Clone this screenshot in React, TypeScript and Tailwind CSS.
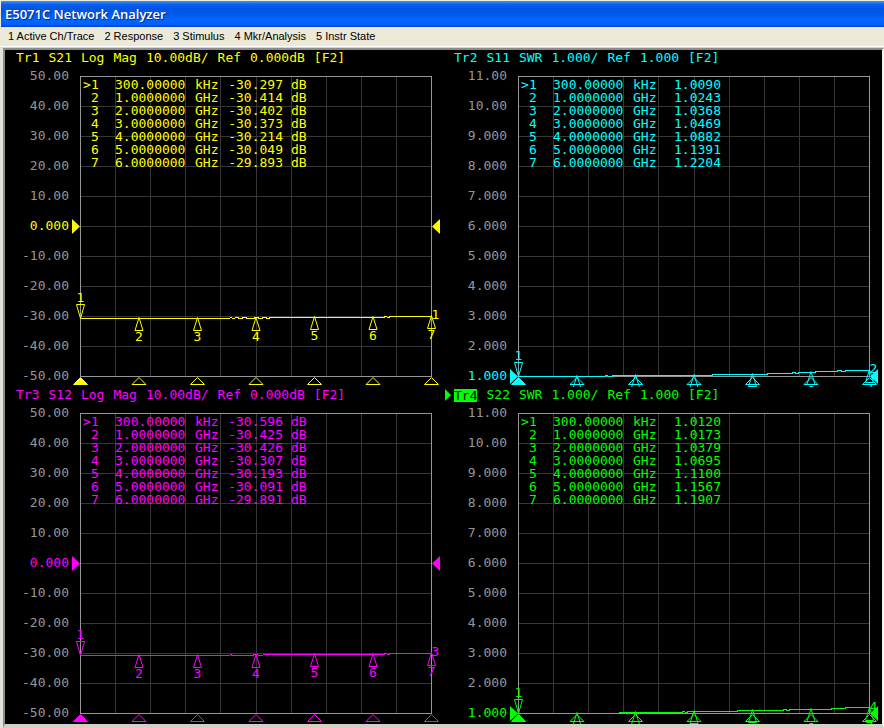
import React from "react";

type Marker = {
  freq: string;
  unit: string;
  value: string;
  y: number;
};

type Trace = {
  id: number;
  header: string[];
  labels: string[];
  refIndex: number;
  valueUnit?: string;
  active?: boolean;
  text: string;
  bg: string;
  points: string;
  markers: Marker[];
};

const FREQS = [
  ["300.00000", "kHz"],
  ["1.0000000", "GHz"],
  ["2.0000000", "GHz"],
  ["3.0000000", "GHz"],
  ["4.0000000", "GHz"],
  ["5.0000000", "GHz"],
  ["6.0000000", "GHz"],
];

const DB_LABELS = ["50.00", "40.00", "30.00", "20.00", "10.00", "0.000", "-10.00", "-20.00", "-30.00", "-40.00", "-50.00"];
const SWR_LABELS = ["11.00", "10.00", "9.000", "8.000", "7.000", "6.000", "5.000", "4.000", "3.000", "2.000", "1.000"];

const MENU = ["1 Active Ch/Trace", "2 Response", "3 Stimulus", "4 Mkr/Analysis", "5 Instr State"];

// Plot space is 351 x 300 units, origin at the top left.
const LOG_POINTS =
  "0,242 149,242 150,241 153,242 156,241 160,242 164,241 168,242 172,242 176,241 180,242 184,241 188,242 190,241 303,241 305,240 308,241 310,240 351,240";
const S12_POINTS =
  "0,242 149,242 150,241 152,242 172,242 174,241 180,242 186,241 303,241 305,240 308,241 310,240 351,240";
const S11_POINTS =
  "0,300 86,300 87,299 92,300 96,299 193,299 195,298 211,298 213,298 248,298 250,297 273,297 275,296 279,297 281,296 296,296 298,295 318,295 320,294 326,295 328,294 351,294";
const S22_POINTS =
  "0,300 100,300 101,299 163,299 165,298 168,299 170,298 218,298 220,297 264,297 266,296 270,297 272,296 312,296 314,295 326,295 328,294 351,294";

const LAST_LABEL_Y = 295;

function makeMarkers(values: string[], ys: number[]): Marker[] {
  return values.map((value, i) => ({ freq: FREQS[i][0], unit: FREQS[i][1], value, y: ys[i] }));
}

const LOG_Y = [242, 241, 241, 241, 240, 240, 239];

const TRACES: Trace[] = [
  {
    id: 1,
    header: ["S21", "Log", "Mag", "10.00dB/", "Ref", "0.000dB", "[F2]"],
    labels: DB_LABELS,
    refIndex: 5,
    valueUnit: "dB",
    text: "text-[#ffff00]",
    bg: "bg-[#ffff00]",
    points: LOG_POINTS,
    markers: makeMarkers(["-30.297", "-30.414", "-30.402", "-30.373", "-30.214", "-30.049", "-29.893"], LOG_Y),
  },
  {
    id: 2,
    header: ["S11", "SWR", "1.000/", "Ref", "1.000", "[F2]"],
    labels: SWR_LABELS,
    refIndex: 10,
    text: "text-[#00ffff]",
    bg: "bg-[#00ffff]",
    points: S11_POINTS,
    markers: makeMarkers(
      ["1.0090", "1.0243", "1.0368", "1.0469", "1.0882", "1.1391", "1.2204"],
      [300, 299, 298, 298, 297, 295, 293],
    ),
  },
  {
    id: 3,
    header: ["S12", "Log", "Mag", "10.00dB/", "Ref", "0.000dB", "[F2]"],
    labels: DB_LABELS,
    refIndex: 5,
    valueUnit: "dB",
    text: "text-[#ff00ff]",
    bg: "bg-[#ff00ff]",
    points: S12_POINTS,
    markers: makeMarkers(["-30.596", "-30.425", "-30.426", "-30.307", "-30.193", "-30.091", "-29.891"], LOG_Y),
  },
  {
    id: 4,
    header: ["S22", "SWR", "1.000/", "Ref", "1.000", "[F2]"],
    labels: SWR_LABELS,
    refIndex: 10,
    active: true,
    text: "text-[#00ff00]",
    bg: "bg-[#00ff00]",
    points: S22_POINTS,
    markers: makeMarkers(
      ["1.0120", "1.0173", "1.0379", "1.0695", "1.1100", "1.1567", "1.1907"],
      [300, 299, 298, 297, 296, 295, 294],
    ),
  },
];

const TENTHS = [1, 2, 3, 4, 5, 6, 7, 8, 9];

function Plot({ trace }: { trace: Trace }) {
  const refY = `${trace.refIndex * 10}%`;
  const endY = trace.markers[6].y;

  return (
    <svg className={`absolute inset-0 h-full w-full overflow-visible ${trace.text}`} aria-hidden="true">
      <g transform="translate(0.5 0.5)" shapeRendering="crispEdges">
        {TENTHS.map((n) => (
          <React.Fragment key={n}>
            <line x1={`${n * 10}%`} x2={`${n * 10}%`} y1="0" y2="100%" stroke="#373737" />
            <line x1="0" x2="100%" y1={`${n * 10}%`} y2={`${n * 10}%`} stroke="#373737" />
          </React.Fragment>
        ))}
        <rect width="100%" height="100%" fill="none" stroke="#969696" />
      </g>

      {/* reference level arrows */}
      <svg x="0" y={refY} overflow="visible">
        <path d="M-8-7 0 .5-8 8z" fill="currentColor" />
      </svg>
      <svg x="100%" y={refY} overflow="visible">
        <path d="M9-7 1 .5 9 8z" fill="currentColor" />
      </svg>

      <g transform="translate(0.5 0.5)">
        <svg width="100%" height="100%" viewBox="0 0 351 300" preserveAspectRatio="none" overflow="visible">
          <polyline
            points={trace.points}
            fill="none"
            stroke="currentColor"
            vectorEffect="non-scaling-stroke"
            shapeRendering="crispEdges"
          />
        </svg>
        {trace.markers.map((marker, i) => {
          const x = `${(i * 100) / 6}%`;
          return (
            <React.Fragment key={i}>
              <svg x={x} y={`${marker.y / 3}%`} overflow="visible">
                <path d={i === 0 ? "M0 0-4-14H4z" : "M0 0-4 13H4z"} fill="none" stroke="currentColor" />
                {(i === 0 || marker.y <= LAST_LABEL_Y) && (
                  <text y={i === 0 ? -17 : 23} textAnchor="middle" fill="currentColor">
                    {i + 1}
                  </text>
                )}
              </svg>
              <svg x={x} y="100%" overflow="visible">
                <path d="M0 1-7 8H7z" fill={i === 0 ? "currentColor" : "none"} stroke="currentColor" />
              </svg>
            </React.Fragment>
          );
        })}
        <svg x="100%" y={`${endY / 3}%`} overflow="visible">
          <text x="0" y="3" fill="currentColor">
            {trace.id}
          </text>
        </svg>
      </g>
    </svg>
  );
}

function TracePanel({ trace }: { trace: Trace }) {
  return (
    <section className="flex min-w-0 flex-col overflow-hidden pb-[11px]">
      <h2 className={`flex h-4 shrink-0 items-center gap-[9px] whitespace-nowrap pl-[2px] ${trace.text}`}>
        <span className="flex items-center gap-[3px]">
          <svg viewBox="0 0 6 12" className="h-3 w-[6px]" aria-hidden="true">
            {trace.active && <path d="M0 0 6 6 0 12z" fill="currentColor" />}
          </svg>
          <span className={trace.active ? `leading-[13px] ${trace.bg} text-black` : ""}>Tr{trace.id}</span>
        </span>
        {trace.header.map((word, i) => (
          <span key={i}>{word}</span>
        ))}
      </h2>

      <div className="mt-[10px] flex flex-1 pr-3">
        <div className="-my-2 flex w-[75px] shrink-0 flex-col justify-between pr-[11px] text-right text-[#969696]">
          {trace.labels.map((label, i) => (
            <span key={label} className={`leading-4 ${i === trace.refIndex ? trace.text : ""}`}>
              {label}
            </span>
          ))}
        </div>
        <div className="relative min-w-0 flex-1 pl-[3px] pt-[2px]">
          <Plot trace={trace} />
          <table className={`relative border-collapse whitespace-nowrap leading-[13px] ${trace.text}`}>
            <tbody>
              {trace.markers.map((marker, i) => (
                <tr key={i}>
                  <td className="w-2 p-0">{i === 0 ? ">" : ""}</td>
                  <td className="w-6 p-0">{i + 1}</td>
                  <td className="w-20 p-0">{marker.freq}</td>
                  <td className="w-8 p-0">{marker.unit}</td>
                  <td className="w-14 p-0 text-right">{marker.value}</td>
                  {trace.valueUnit && <td className="p-0 pl-2">{trace.valueUnit}</td>}
                </tr>
              ))}
            </tbody>
          </table>
        </div>
      </div>
    </section>
  );
}

export default function App() {
  return (
    <div className="flex min-h-screen flex-col bg-[#ece9d8]">
      <header className="flex h-[27px] items-center border-t border-l border-[#ece9d8] bg-[linear-gradient(#3c96ff_0%,#0a62ee_12%,#0054e3_30%,#0058ee_50%,#0066ff_75%,#0060fc_90%,#003ccc_100%)] pt-[2px] pl-1">
        <h1 className="font-['Open_Sans',sans-serif] text-[13px] font-semibold text-white [text-shadow:1px_1px_1px_#0a2a80]">
          E5071C Network Analyzer
        </h1>
      </header>

      <nav className="flex h-5 items-center gap-[10px] whitespace-nowrap border-b border-white pl-2 font-['Liberation_Sans',sans-serif] text-[11px] text-black">
        {MENU.map((item) => (
          <button key={item} type="button">
            {item}
          </button>
        ))}
      </nav>

      <div className="flex flex-1 flex-col border-t border-l-[3px] border-t-[#d4d4d4] border-l-[#e4e2dc]">
        <main className="grid flex-1 grid-cols-1 border-t-2 border-r-2 border-b-4 border-l-2 border-t-[#8c8c8c] border-r-[#f4f3ee] border-b-[#d4d0c8] border-l-[#8c8c8c] bg-black pr-px font-['DejaVu_Sans_Mono',monospace] text-[13px] sm:grid-cols-2 sm:grid-rows-2">
          {TRACES.map((trace) => (
            <TracePanel key={trace.id} trace={trace} />
          ))}
        </main>
      </div>
    </div>
  );
}
